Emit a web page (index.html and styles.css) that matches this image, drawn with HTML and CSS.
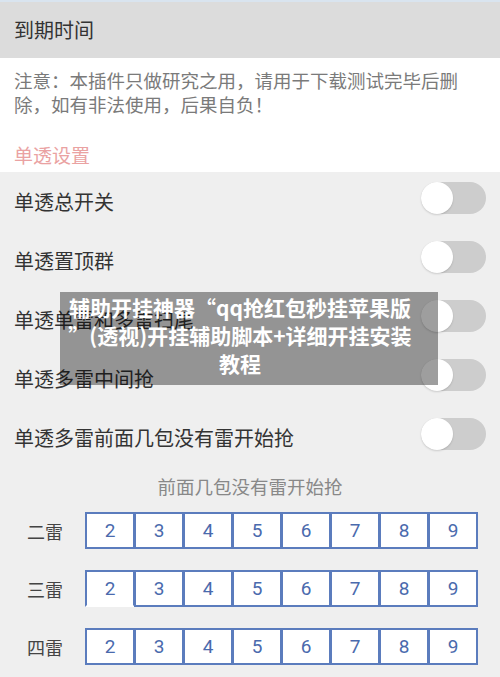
FILE: index.html
```html
<!DOCTYPE html>
<html lang="zh-CN">

<head>
    <title>单透设置</title>
    <meta charset="UTF-8">
    <meta name="viewport" content="width=device-width, initial-scale=1.0">
    <link rel="stylesheet" href="styles.css">
</head>

<body>
    <div class="page">
        <div class="head">到期时间</div>

        <div class="notice">
            <p class="tip">注意：本插件只做研究之用，请用于下载测试完毕后删除，如有非法使用，后果自负！</p>
            <div class="group-title">单透设置</div>
        </div>

        <div class="settings">
            <div class="row">
                <span class="label">单透总开关</span>
                <span class="switch"><i></i></span>
            </div>
            <div class="row">
                <span class="label">单透置顶群</span>
                <span class="switch"><i></i></span>
            </div>
            <div class="row">
                <span class="label">单透单雷和多雷扫尾</span>
                <span class="switch"><i></i></span>
            </div>
            <div class="row">
                <span class="label">单透多雷中间抢</span>
                <span class="switch"><i></i></span>
            </div>
            <div class="row">
                <span class="label">单透多雷前面几包没有雷开始抢</span>
                <span class="switch"><i></i></span>
            </div>

            <div class="sub-title">前面几包没有雷开始抢</div>

            <div class="pick">
                <div class="pick-row">
                    <span class="pick-name">二雷</span>
                    <div class="nums">
                        <a>2</a><a>3</a><a>4</a><a>5</a><a>6</a><a>7</a><a>8</a><a>9</a>
                    </div>
                </div>
                <div class="pick-row">
                    <span class="pick-name">三雷</span>
                    <div class="nums">
                        <a class="open">2</a><a>3</a><a>4</a><a>5</a><a>6</a><a>7</a><a>8</a><a>9</a>
                    </div>
                </div>
                <div class="pick-row">
                    <span class="pick-name">四雷</span>
                    <div class="nums">
                        <a>2</a><a>3</a><a>4</a><a>5</a><a>6</a><a>7</a><a>8</a><a>9</a>
                    </div>
                </div>
            </div>
        </div>

        <div class="banner">辅助开挂神器“qq抢红包秒挂苹果版<br><span class="quote">”</span>(透视)开挂辅助脚本+详细开挂安装<br>教程</div>
    </div>
</body>

</html>
```

FILE: styles.css
```css
* {
    margin: 0;
    padding: 0;
    box-sizing: border-box;
}

body {
    font-family: "Noto Sans CJK SC", "Noto Sans", sans-serif;
    background-color: #efefef;
    color: #333;
}

.page {
    position: relative;
    width: 500px;
    min-height: 677px;
}

.head {
    height: 58px;
    border-top: 2px solid #d9e4ef;
    background-color: #dcdcdc;
    padding-left: 14px;
    font-size: 20px;
    line-height: 56px;
    color: #333;
}

.notice {
    background-color: #fff;
    height: 114px;
    padding: 10px 38px 0 14px;
}

.tip {
    font-size: 18.5px;
    line-height: 24px;
    color: #7a7a7a;
}

.group-title {
    margin-top: 27px;
    font-size: 19px;
    line-height: 24px;
    color: #eaa2a2;
}

.settings {
    background-color: #efefef;
}

.row {
    display: flex;
    align-items: center;
    justify-content: space-between;
    height: 59px;
    padding: 0 14px;
}

.label {
    font-size: 20px;
    color: #333;
}

.switch {
    position: relative;
    width: 65px;
    height: 32px;
    margin-bottom: 7px;
    border-radius: 16px;
    background-color: #cdcdcd;
}

.switch i {
    position: absolute;
    left: 0;
    top: 0;
    width: 32px;
    height: 32px;
    border-radius: 50%;
    background-color: #fff;
    box-shadow: 0 1px 2px rgba(0, 0, 0, .15);
}

.sub-title {
    height: 38px;
    line-height: 38px;
    text-align: center;
    font-size: 18.5px;
    color: #888;
}

.pick {
    display: flex;
    flex-direction: column;
    gap: 21px;
    padding-top: 7px;
    padding-bottom: 13px;
}

.pick-row {
    display: flex;
    align-items: center;
}

.pick-name {
    width: 72px;
    margin-left: 9px;
    margin-right: 4px;
    text-align: center;
    font-size: 18px;
    color: #444;
}

.nums {
    display: flex;
}

.nums a {
    width: 50px;
    height: 37px;
    border: 2px solid #5b7cbd;
    background-color: #fff;
    text-align: center;
    line-height: 33px;
    font-family: Roboto, "Liberation Sans", sans-serif;
    font-size: 19px;
    color: #4a6aad;
}

.nums a + a {
    margin-left: -1px;
}

.nums a.open {
    border-bottom-color: #fff;
}

/* 悬浮标题条 */
.banner {
    position: absolute;
    left: 60px;
    top: 292px;
    width: 378px;
    height: 93px;
    padding: 1px 18px 0 0;
    background-color: rgba(0, 0, 0, .38);
    text-align: center;
    font-size: 21px;
    font-weight: bold;
    line-height: 28px;
    color: #fff;
}

.banner .quote {
    display: inline-block;
    width: 1em;
    text-align: left;
}
```
